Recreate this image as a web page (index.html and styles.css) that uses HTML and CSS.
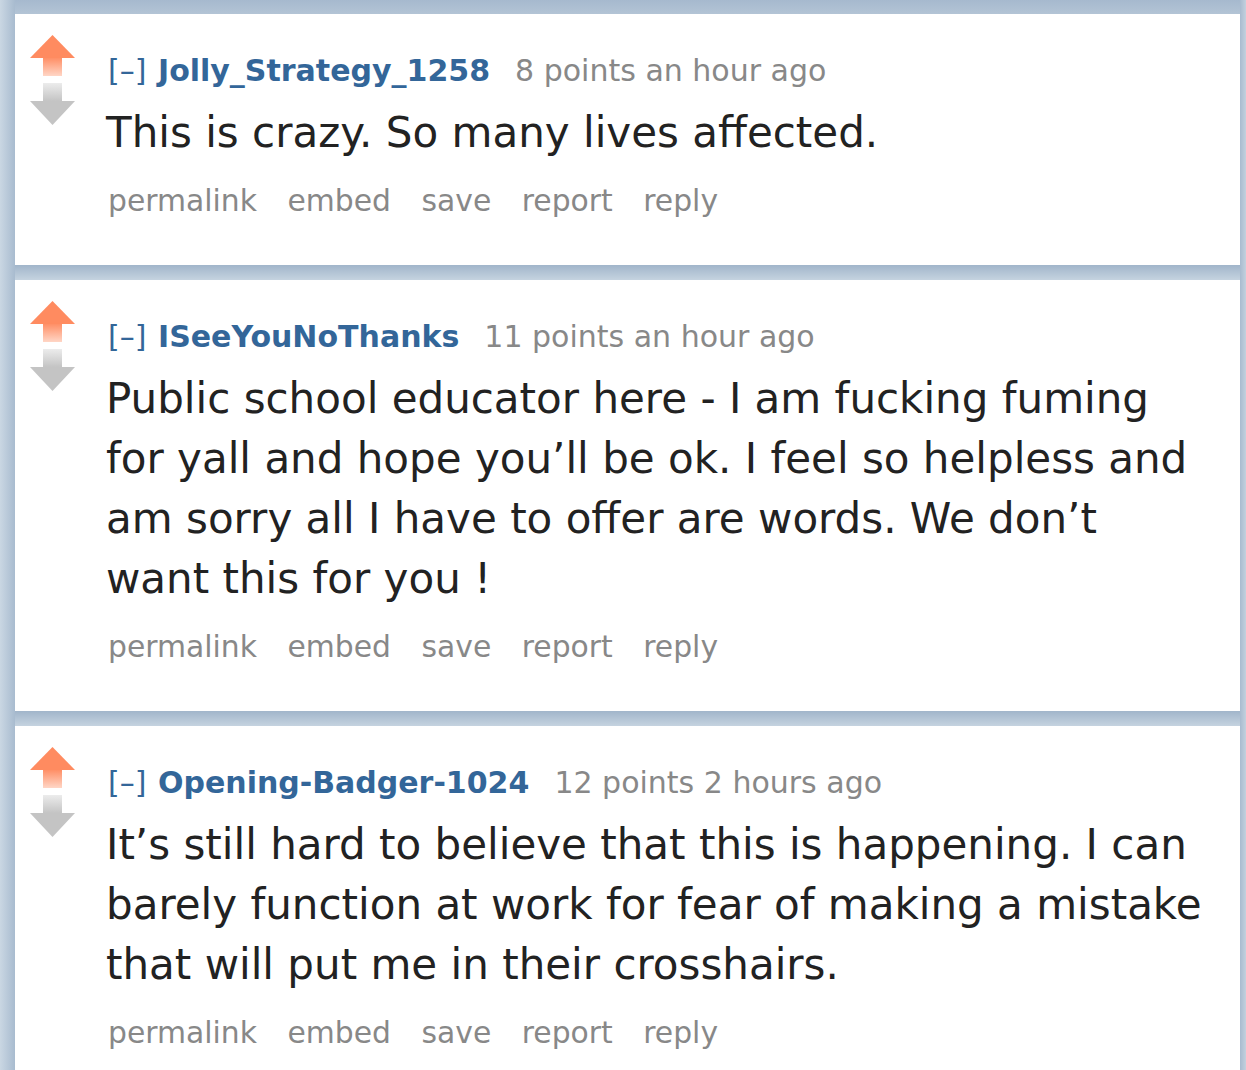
FILE: index.html
```html
<!DOCTYPE html>
<html>
<head>
<meta charset="utf-8">
<link rel="stylesheet" href="styles.css">
</head>
<body>
<svg width="0" height="0" class="defs">
  <defs>
    <linearGradient id="upStem" x1="0" y1="0" x2="0" y2="1">
      <stop offset="0" stop-color="#ff8f66"/>
      <stop offset="1" stop-color="#ffd6c6"/>
    </linearGradient>
    <linearGradient id="downStem" x1="0" y1="0" x2="0" y2="1">
      <stop offset="0" stop-color="#ececec"/>
      <stop offset="1" stop-color="#c4c4c4"/>
    </linearGradient>
    <symbol id="arrows" viewBox="0 0 46 92">
      <polygon points="22.5,0 45,23 0,23" fill="#ff8b60"/>
      <rect x="13" y="23" width="19" height="18" fill="url(#upStem)"/>
      <rect x="13" y="48" width="19" height="18" fill="url(#downStem)"/>
      <polygon points="0,66 45,66 22.5,90" fill="#c4c4c4"/>
    </symbol>
  </defs>
</svg>
<div class="page">
  <div class="band band-top"></div>

  <div class="comment">
    <div class="votes"><svg class="arrows" width="46" height="92"><use href="#arrows"/></svg></div>
    <div class="entry">
      <p class="tagline"><span class="expand">[–]</span> <a class="author">Jolly_Strategy_1258</a><span class="score">8 points an hour ago</span></p>
      <div class="md"><p>This is crazy. So many lives affected.</p></div>
      <ul class="buttons"><li>permalink</li><li>embed</li><li>save</li><li>report</li><li>reply</li></ul>
    </div>
  </div>

  <div class="band"></div>

  <div class="comment">
    <div class="votes"><svg class="arrows" width="46" height="92"><use href="#arrows"/></svg></div>
    <div class="entry">
      <p class="tagline"><span class="expand">[–]</span> <a class="author">ISeeYouNoThanks</a><span class="score">11 points an hour ago</span></p>
      <div class="md"><p>Public school educator here - I am fucking fuming for yall and hope you’ll be ok. I feel so helpless and am sorry all I have to offer are words. We don’t want this for you !</p></div>
      <ul class="buttons"><li>permalink</li><li>embed</li><li>save</li><li>report</li><li>reply</li></ul>
    </div>
  </div>

  <div class="band"></div>

  <div class="comment">
    <div class="votes"><svg class="arrows" width="46" height="92"><use href="#arrows"/></svg></div>
    <div class="entry">
      <p class="tagline"><span class="expand">[–]</span> <a class="author">Opening-Badger-1024</a><span class="score">12 points 2 hours ago</span></p>
      <div class="md"><p>It’s still hard to believe that this is happening. I can barely function at work for fear of making a mistake that will put me in their crosshairs.</p></div>
      <ul class="buttons"><li>permalink</li><li>embed</li><li>save</li><li>report</li><li>reply</li></ul>
    </div>
  </div>
</div>
</body>
</html>
```

FILE: styles.css
```css
html, body {
  margin: 0;
  padding: 0;
}
body {
  font-family: "DejaVu Sans", Verdana, sans-serif;
  background-color: #b9c9d9;
  background-image:
    linear-gradient(to right, #cad7e3 0, #a8bbcf 15px),
    linear-gradient(to right, #a8bbcf 0, #c3d1de 6px);
  background-size: 15px 100%, 6px 100%;
  background-position: left top, right top;
  background-repeat: no-repeat;
  min-height: 1070px;
  overflow: hidden;
}
.defs {
  position: absolute;
}
.page {
  margin: 0 6px 0 15px;
}
.band {
  height: 15px;
  background: linear-gradient(to bottom, #a1b5ca, #c5d3e0);
}
.band-top {
  height: 14px;
  background: linear-gradient(to bottom, #a6b9ce, #b3c4d5);
}
.comment {
  background: #fff;
  display: flex;
  align-items: flex-start;
  padding: 21px 34px 44px 15px;
}
.votes {
  width: 46px;
  flex: none;
}
.arrows {
  display: block;
}
.entry {
  margin-left: 30px;
  padding-top: 16px;
  flex: 1;
  min-width: 0;
}
.tagline {
  margin: 0;
  font-size: 30px;
  line-height: 40px;
  color: #888;
  white-space: nowrap;
}
.expand {
  color: #369;
  margin-left: 2px;
}
.author {
  color: #369;
  font-weight: bold;
  margin-left: 2px;
}
.score {
  margin-left: 25px;
}
.md {
  margin-top: 12px;
  font-size: 42px;
  line-height: 60px;
  color: #222;
}
.md p {
  margin: 0;
}
.buttons {
  list-style: none;
  margin: 18px 0 0 2px;
  padding: 0;
  display: flex;
  gap: 30.5px;
  font-size: 29.8px;
  line-height: 40px;
  color: #888;
}
```
